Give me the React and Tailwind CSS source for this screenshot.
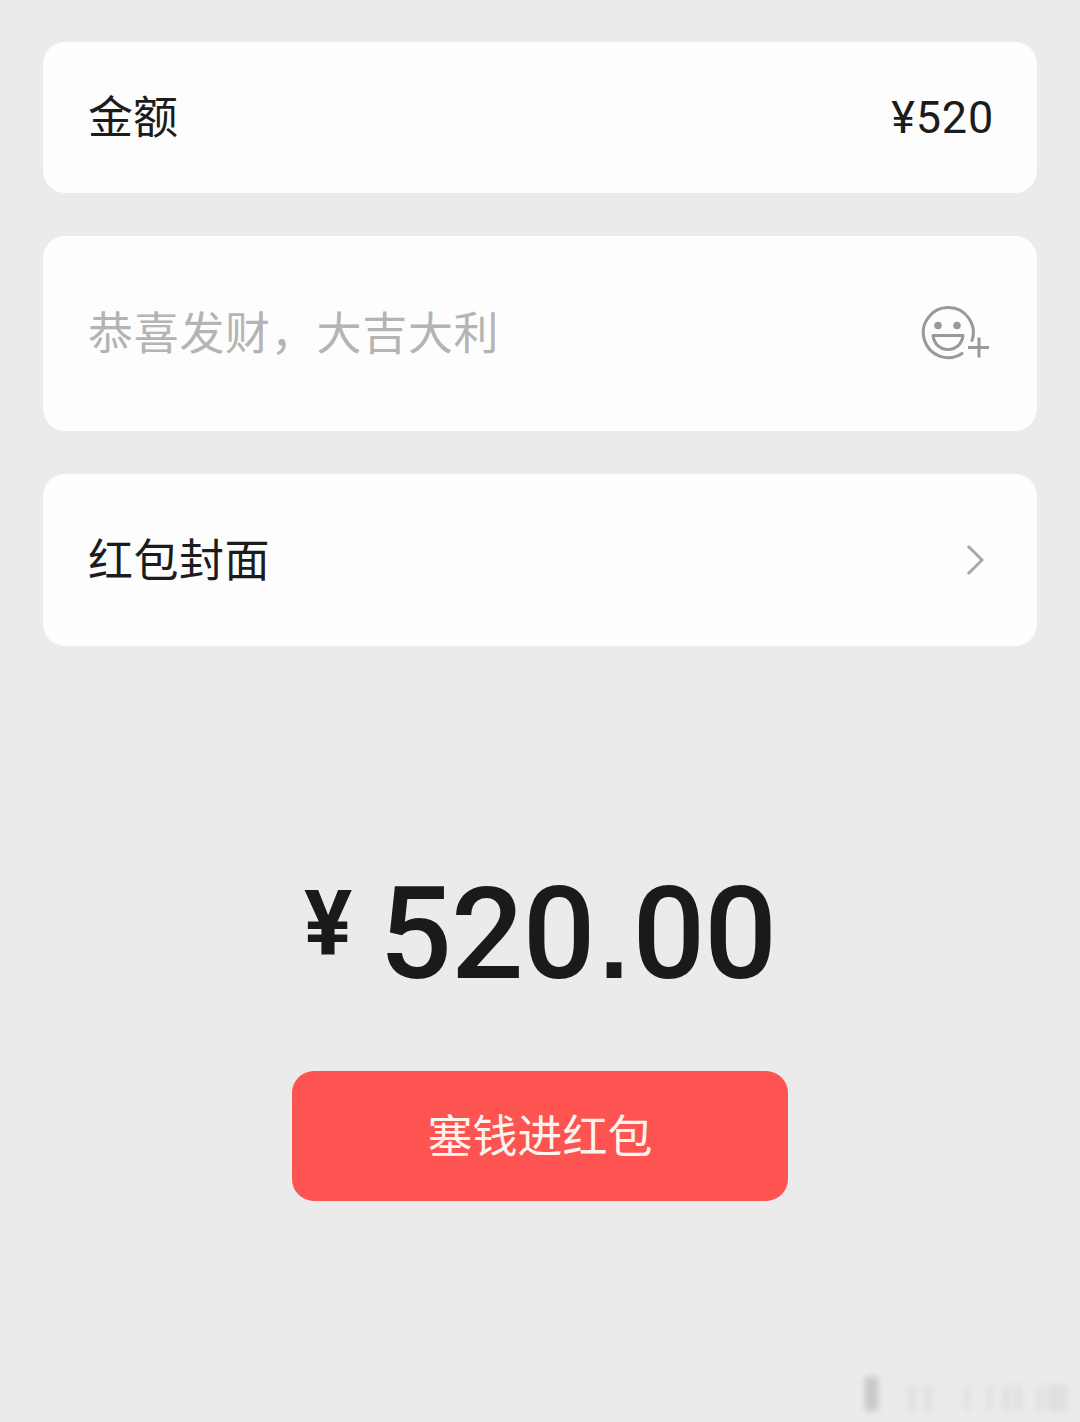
const cjk = { fontFamily: '"Noto Sans CJK SC", "Noto Sans", sans-serif' };

const SmileyPlus = () => (
  <svg width="70" height="56" viewBox="0 0 70 56" fill="none" stroke="#999999" strokeWidth="3">
    <path d="M52 34.5A25 25 0 1 0 42 47.5" strokeLinecap="round" />
    <circle cx="18" cy="19.5" r="3.8" fill="#999999" stroke="none" />
    <circle cx="37" cy="19.5" r="3.8" fill="#999999" stroke="none" />
    <path d="M13 29.5H43C42 38 36 43.5 28 43.5C20 43.5 14 38 13 29.5Z" strokeLinejoin="round" />
    <path d="M48 41.5H69M59 31.5V51.5" />
  </svg>
);

const Chevron = () => (
  <svg width="18" height="32" viewBox="0 0 18 32" fill="none" stroke="#a8a8a8" strokeWidth="3">
    <path d="M2 2L16 16L2 30" />
  </svg>
);

export default function App() {
  return (
    <div className="relative h-[1422px] w-[1080px] overflow-hidden bg-[#ebebeb] px-[43px] pt-[42px]" style={cjk}>
      <div className="flex flex-col gap-[43px]">
        <div className="flex h-[151px] items-center justify-between rounded-[22px] bg-[#fdfdfd] pl-[45px] pr-[43px]">
          <span className="pb-[6px] text-[45px] leading-none text-[#1c1c1c]">金额</span>
          <span className="font-['Roboto'] text-[45px] leading-none tracking-[0.8px] text-[#1c1c1c]">¥520</span>
        </div>
        <div className="flex h-[195px] items-center justify-between rounded-[22px] bg-[#fdfdfd] pl-[45px] pr-[47px]">
          <span className="pb-[6px] text-[45px] leading-none tracking-[0.7px] text-[#b4b4b4]">恭喜发财，大吉大利</span>
          <SmileyPlus />
        </div>
        <div className="flex h-[172px] items-center justify-between rounded-[22px] bg-[#fdfdfd] pl-[45px] pr-[53px]">
          <span className="pb-[6px] text-[45px] leading-none tracking-[0.5px] text-[#1c1c1c]">红包封面</span>
          <Chevron />
        </div>
      </div>

      <div className="mt-[222px] flex items-start justify-center gap-[27px] font-['Roboto'] text-[#1a1a1a]">
        <span className="mt-[12px] text-[90px] font-bold leading-none">¥</span>
        <span className="text-[128px] font-medium leading-[132px] tracking-[-1px]">
          520<span className="mx-[5px] font-['Liberation_Sans'] text-[105px] font-bold leading-none">.</span>00
        </span>
      </div>

      <div className="mt-[71px] flex justify-center">
        <button className="flex h-[130px] w-[496px] items-center justify-center rounded-[22px] bg-[#fd5351] pb-[4px] text-[45px] text-[#fdf3ef]">
          塞钱进红包
        </button>
      </div>

      {/* blurred watermark, bottom right */}
      <div className="absolute bottom-[11px] right-[13px] flex items-end blur-[3px]">
        <div className="h-[34px] w-[13px] bg-black/15" />
        <div className="ml-[30px] h-[26px] w-[7px] bg-black/5" />
        <div className="ml-[10px] h-[26px] w-[7px] bg-black/5" />
        <div className="ml-[33px] h-[26px] w-[5px] bg-black/5" />
        <div className="ml-[17px] h-[26px] w-[5px] bg-black/5" />
        <div className="ml-[11px] h-[26px] w-[7px] bg-black/5" />
        <div className="ml-[5px] h-[26px] w-[7px] bg-black/5" />
        <div className="ml-[15px] h-[26px] w-[6px] bg-black/5" />
        <div className="ml-[5px] h-[26px] w-[19px] bg-black/5" />
      </div>
    </div>
  );
}
